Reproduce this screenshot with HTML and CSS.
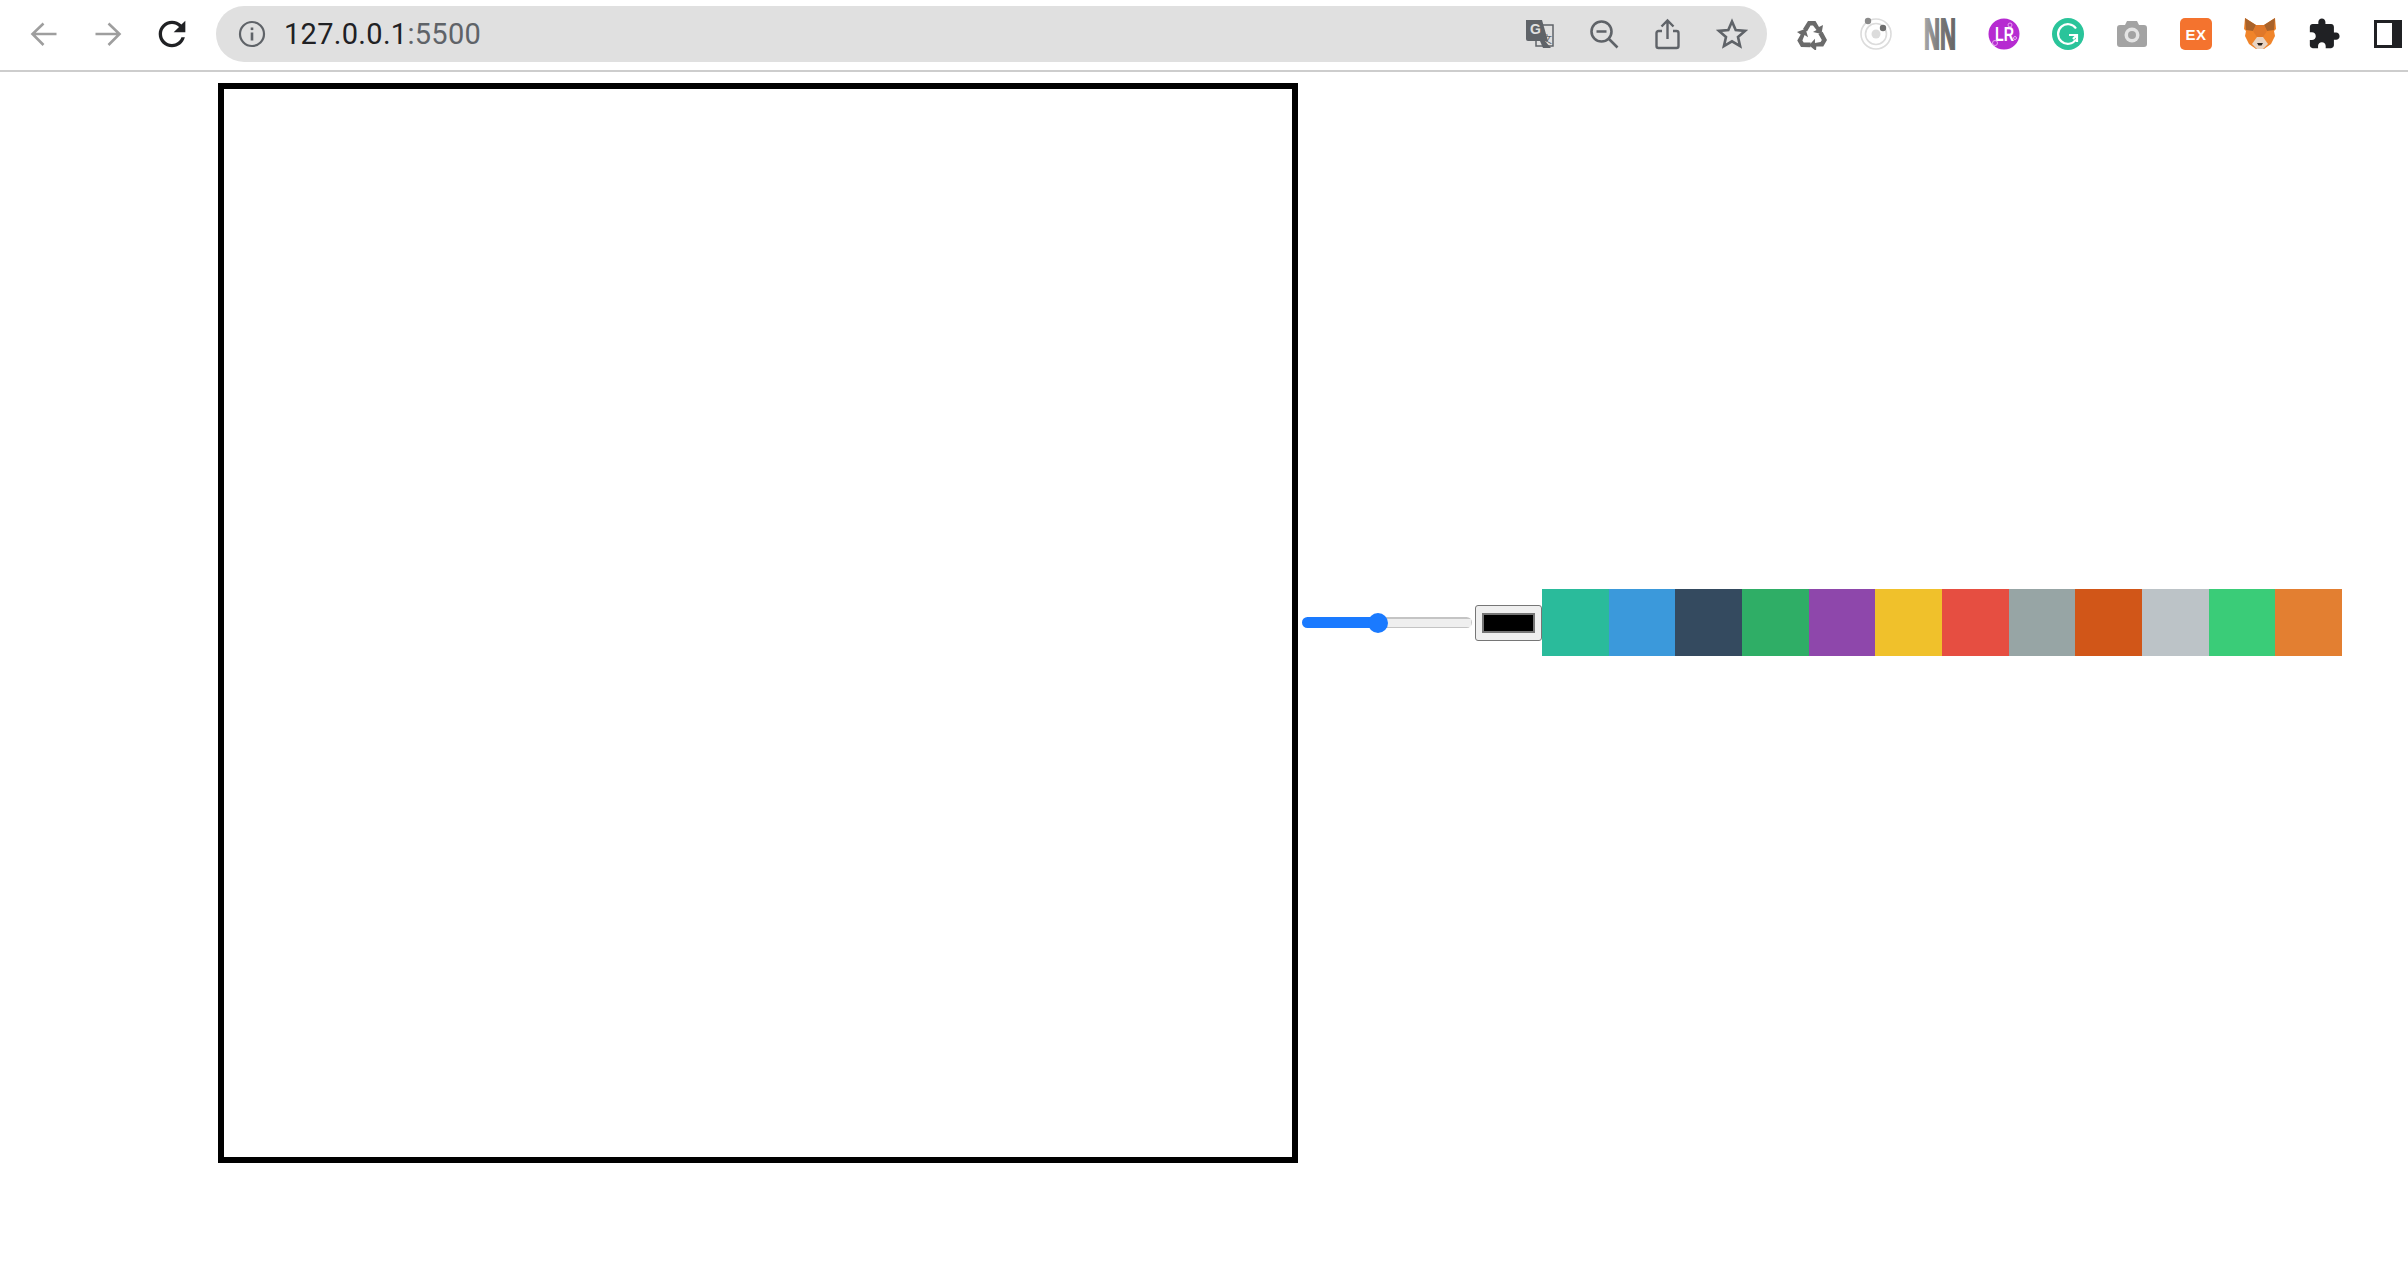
FILE: index.html
```html
<!DOCTYPE html>
<html lang="en">
<head>
  <meta charset="UTF-8" />
  <meta name="viewport" content="width=device-width, initial-scale=1.0"/>
  <title>Paint</title>
  <link rel="stylesheet" href="styles.css">
</head>

<body>
  <header class="toolbar">
    <div class="nav-btns">
      <span class="tool-btn">
        <svg width="32" height="32" viewBox="0 0 32 32" fill="none" stroke="#9e9e9e" stroke-width="2.6"><path d="M28.5 16H5.5M15.5 5.5L4.5 16l11 11"/></svg>
      </span>
      <span class="tool-btn">
        <svg width="32" height="32" viewBox="0 0 32 32" fill="none" stroke="#9e9e9e" stroke-width="2.6"><path d="M3.5 16h23M16.5 5.5l11 10.5-11 11"/></svg>
      </span>
      <span class="tool-btn">
        <svg width="40" height="40" viewBox="0 0 24 24" fill="#202124"><path d="M17.65 6.35C16.2 4.9 14.21 4 12 4c-4.42 0-7.99 3.58-7.99 8s3.57 8 7.99 8c3.73 0 6.84-2.55 7.73-6h-2.08c-.82 2.33-3.04 4-5.65 4-3.31 0-6-2.69-6-6s2.69-6 6-6c1.66 0 3.14.69 4.22 1.78L13 11h7V4l-2.35 2.35z"/></svg>
      </span>
    </div>

    <div class="address-bar">
      <svg class="info-icon" width="28" height="28" viewBox="0 0 28 28" fill="none" stroke="#5f6368" stroke-width="2.2">
        <circle cx="14" cy="14" r="12"/>
        <path d="M14 12.5v8" stroke-width="2.6"/>
        <path d="M14 7.5v2.6" stroke-width="2.6"/>
      </svg>
      <span class="url">127.0.0.1<span class="url-port">:5500</span></span>
      <div class="bar-icons">
        <span class="tool-btn">
          <svg width="30" height="30" viewBox="0 0 30 30">
            <rect x="11" y="6" width="17" height="21" fill="#e0e0e0" stroke="#5f6368" stroke-width="1.5"/>
            <path d="M1 1h16l6 21H3a2 2 0 0 1-2-2z" fill="#5f6368"/>
            <path d="M15 22l3 7h8l-6-7z" fill="#5f6368"/>
            <text class="translate-g" x="5" y="15">G</text>
            <text class="translate-zi" x="17" y="24">文</text>
          </svg>
        </span>
        <span class="tool-btn">
          <svg width="30" height="30" viewBox="0 0 30 30" fill="none" stroke="#5f6368" stroke-width="2.6"><circle cx="12.5" cy="12.5" r="10"/><path d="M7.5 12.5h10M20 20l8.5 8.5"/></svg>
        </span>
        <span class="tool-btn">
          <svg width="30" height="32" viewBox="0 0 30 32" fill="none" stroke="#5f6368" stroke-width="2.4"><path d="M9 13H5.5a2 2 0 0 0-2 2v13a2 2 0 0 0 2 2h18a2 2 0 0 0 2-2V15a2 2 0 0 0-2-2H20M14.5 21V3M8.5 8.5l6-6 6 6"/></svg>
        </span>
        <span class="tool-btn">
          <svg width="32" height="32" viewBox="0 0 32 32" fill="none" stroke="#5f6368" stroke-width="2.6"><path d="M16 3.5l3.7 8.6 9.3.8-7 6.1 2.1 9.1-8.1-4.8-8.1 4.8 2.1-9.1-7-6.1 9.300-.8z"/></svg>
        </span>
      </div>
    </div>

    <div class="ext-icons">
      <span class="tool-btn">
        <svg width="32" height="32" viewBox="0 0 32 32" fill="#6b6b6b">
          <g id="recycleArm">
            <path d="M7 11l5-8h7.500l3.500 6 4-2-1.500 9-8.500-2 3.500-2-3.500-4.500h-2.500l-3.500 6z"/>
          </g>
          <use href="#recycleArm" transform="rotate(120 16 18)"/>
          <use href="#recycleArm" transform="rotate(240 16 18)"/>
        </svg>
      </span>
      <span class="tool-btn">
        <svg width="34" height="34" viewBox="0 0 34 34" fill="none" stroke="#dcdcdc" stroke-width="1.6">
          <circle cx="17" cy="17" r="15"/>
          <circle cx="17" cy="17" r="10.5"/>
          <circle cx="17" cy="17" r="4.5" fill="#dcdcdc" stroke="none"/>
          <circle cx="9" cy="4" r="3.2" fill="#8a8a8a" stroke="none"/>
          <circle cx="24" cy="11" r="3.2" fill="#6e6e6e" stroke="none"/>
        </svg>
      </span>
      <span class="tool-btn">
        <svg width="32" height="32" viewBox="0 0 32 32">
          <defs>
            <linearGradient id="nnFill" x1="0" y1="0" x2="1" y2="0">
              <stop offset="0" stop-color="#a8a8a8"/>
              <stop offset="0.5" stop-color="#777"/>
              <stop offset="1" stop-color="#666"/>
            </linearGradient>
          </defs>
          <text class="nn-logo" x="0" y="32" textLength="32" lengthAdjust="spacingAndGlyphs" fill="url(#nnFill)" stroke="url(#nnFill)">NN</text>
        </svg>
      </span>
      <span class="tool-btn">
        <svg width="32" height="32" viewBox="0 0 32 32">
          <circle cx="16" cy="16" r="15.5" fill="#b62bd1"/>
          <text class="lr-logo" x="7" y="23" textLength="19" lengthAdjust="spacingAndGlyphs">LR</text>
          <circle cx="22" cy="7" r="2" fill="none" stroke="#e6a8f0"/>
          <circle cx="7" cy="25" r="2.5" fill="none" stroke="#e6a8f0"/>
          <circle cx="27" cy="20" r="1.5" fill="none" stroke="#e6a8f0"/>
        </svg>
      </span>
      <span class="tool-btn">
        <svg width="32" height="32" viewBox="0 0 32 32" fill="none">
          <circle cx="16" cy="16" r="16" fill="#2ac49a"/>
          <path d="M24 10.500A9.8 9.8 0 1 0 24 21.500" stroke="#fff" stroke-width="2.2"/>
          <path d="M17 17h8v7M25 17l-4 4" stroke="#fff" stroke-width="2.2"/>
        </svg>
      </span>
      <span class="tool-btn">
        <svg width="30" height="28" viewBox="0 0 30 28">
          <path d="M3 5h5l2-4h10l2 4h5a3 3 0 0 1 3 3v16a3 3 0 0 1-3 3H3a3 3 0 0 1-3-3V8a3 3 0 0 1 3-3z" fill="#a3a3a3"/>
          <circle cx="15" cy="15" r="7.5" fill="#e4e4e4"/>
          <circle cx="15" cy="15" r="4" fill="#a3a3a3"/>
        </svg>
      </span>
      <span class="tool-btn">
        <span class="ex-logo">EX</span>
      </span>
      <span class="tool-btn">
        <svg width="32" height="32" viewBox="0 0 32 32">
          <path d="M1 0l11 7h8L31 0l1 11-2 2 1 5-4 8-7 5h-8l-7-5-4-8 1-5-2-2z" fill="#f0842a"/>
          <path d="M1 0l11 7-3 6-7-1zM31 0L20 7l3 6 7-1z" fill="#a9622a"/>
          <path d="M12 7h8l3 6-4 6h-6l-4-6z" fill="#e0782a"/>
          <path d="M13 19h6l5 7-5 5h-6l-5-5z" fill="#e8d3c2"/>
          <path d="M13 25h6l-1.5 2.5h-3z" fill="#2b2118"/>
        </svg>
      </span>
      <span class="tool-btn">
        <svg width="34" height="34" viewBox="0 0 24 24" fill="#202124"><path d="M20.5 11H19V7c0-1.1-.9-2-2-2h-4V3.5C13 2.12 11.88 1 10.5 1S8 2.12 8 3.5V5H4c-1.1 0-1.99.9-1.99 2v3.8H3.5c1.49 0 2.7 1.21 2.7 2.7s-1.21 2.7-2.7 2.7H2V20c0 1.1.9 2 2 2h3.8v-1.5c0-1.49 1.21-2.7 2.7-2.7 1.49 0 2.7 1.21 2.7 2.7V22H17c1.1 0 2-.9 2-2v-4h1.5c1.38 0 2.5-1.12 2.5-2.5S21.88 11 20.5 11z"/></svg>
      </span>
      <span class="tool-btn">
        <span class="side-panel"></span>
      </span>
    </div>
  </header>

  <main class="paint-app">
    <canvas id="lienzo" width="1068" height="1068"></canvas>
    <input class="brush-size" type="range" min="0" max="100" value="44" />
    <input class="brush-color" type="color" value="#000000" />
    <div class="palette">
      <div class="swatch swatch-1"></div>
      <div class="swatch swatch-2"></div>
      <div class="swatch swatch-3"></div>
      <div class="swatch swatch-4"></div>
      <div class="swatch swatch-5"></div>
      <div class="swatch swatch-6"></div>
      <div class="swatch swatch-7"></div>
      <div class="swatch swatch-8"></div>
      <div class="swatch swatch-9"></div>
      <div class="swatch swatch-10"></div>
      <div class="swatch swatch-11"></div>
      <div class="swatch swatch-12"></div>
    </div>
  </main>
</body>
</html>
```

FILE: styles.css
```css
body {
  margin: 0;
  background-color: #fff;
  font-family: Roboto, "Liberation Sans", sans-serif;
  color: #202124;
}

.toolbar {
  display: flex;
  align-items: center;
  padding: 6px 0 8px 12px;
  border-bottom: 2px solid #cdcdcd;
}
.nav-btns,
.bar-icons,
.ext-icons {
  display: flex;
  align-items: center;
}
.nav-btns {
  margin-right: 12px;
}
.tool-btn {
  display: flex;
  align-items: center;
  justify-content: center;
  width: 64px;
  height: 56px;
}

.address-bar {
  display: flex;
  align-items: center;
  flex: none;
  width: 1551px;
  height: 56px;
  padding-left: 22px;
  box-sizing: border-box;
  border-radius: 28px;
  background: #e0e0e0;
}
.info-icon {
  margin-right: 18px;
}
.url {
  font-size: 29px;
  letter-spacing: 0.3px;
}
.url-port {
  color: #5f6368;
}
.bar-icons {
  margin-left: auto;
  margin-right: 3px;
}
.translate-g {
  font: bold 14px "Liberation Sans", sans-serif;
  fill: #e0e0e0;
}
.translate-zi {
  font: 10px "Noto Sans CJK SC", sans-serif;
  fill: #5f6368;
}

.ext-icons {
  margin-left: 13px;
}
.nn-logo {
  font: bold 44px "Liberation Sans", sans-serif;
  stroke-width: 2px;
}
.lr-logo {
  font: bold 20px "Liberation Sans", sans-serif;
  fill: #fff;
}
.ex-logo {
  display: flex;
  align-items: center;
  justify-content: center;
  width: 32px;
  height: 32px;
  border-radius: 5px;
  background: #f4732e;
  color: #fff;
  font: bold 15px "Liberation Sans", sans-serif;
  letter-spacing: 0.5px;
}
.side-panel {
  width: 28px;
  height: 28px;
  box-sizing: border-box;
  border: 3px solid #202124;
  border-right-width: 10px;
  background: #fff;
}

.paint-app {
  display: flex;
  align-items: center;
  margin: 11px 0 0 218px;
}
#lienzo {
  flex: none;
  border: 6px solid #000;
  background: #fff;
}

.brush-size {
  -webkit-appearance: none;
  appearance: none;
  flex: none;
  width: 170px;
  height: 20px;
  margin: 0 3px 1px 4px;
  background: transparent;
}
.brush-size::-webkit-slider-runnable-track {
  height: 11px;
  border-radius: 6px;
  background:
    linear-gradient(#1a7aff, #1a7aff) 0 0 / 76px 100% no-repeat,
    linear-gradient(#efefef, #efefef) center / calc(100% - 3px) calc(100% - 3px) no-repeat,
    #c4c4c4;
}
.brush-size::-webkit-slider-thumb {
  -webkit-appearance: none;
  width: 20px;
  height: 20px;
  margin-top: -4.5px;
  border-radius: 50%;
  background: #1a7aff;
}

.brush-color {
  -webkit-appearance: none;
  appearance: none;
  flex: none;
  width: 67px;
  height: 36px;
  margin-bottom: 1px;
  padding: 7px 6px;
  box-sizing: border-box;
  border: 1px solid #767676;
  border-radius: 3px;
  background: #efefef;
}
.brush-color::-webkit-color-swatch-wrapper {
  padding: 0;
}
.brush-color::-webkit-color-swatch {
  border: 2px solid #767676;
  border-radius: 0;
}

.palette {
  display: flex;
  flex: none;
  width: 800px;
  margin-bottom: 1px;
}
.swatch {
  flex: 1;
  height: 67px;
}
.swatch-1 { background: #2abb9b; }
.swatch-2 { background: #3b99db; }
.swatch-3 { background: #344a5f; }
.swatch-4 { background: #2fae66; }
.swatch-5 { background: #8e47ab; }
.swatch-6 { background: #f0c12b; }
.swatch-7 { background: #e64e41; }
.swatch-8 { background: #97a5a5; }
.swatch-9 { background: #d15618; }
.swatch-10 { background: #bcc3c7; }
.swatch-11 { background: #3acc78; }
.swatch-12 { background: #e37f31; }
```
